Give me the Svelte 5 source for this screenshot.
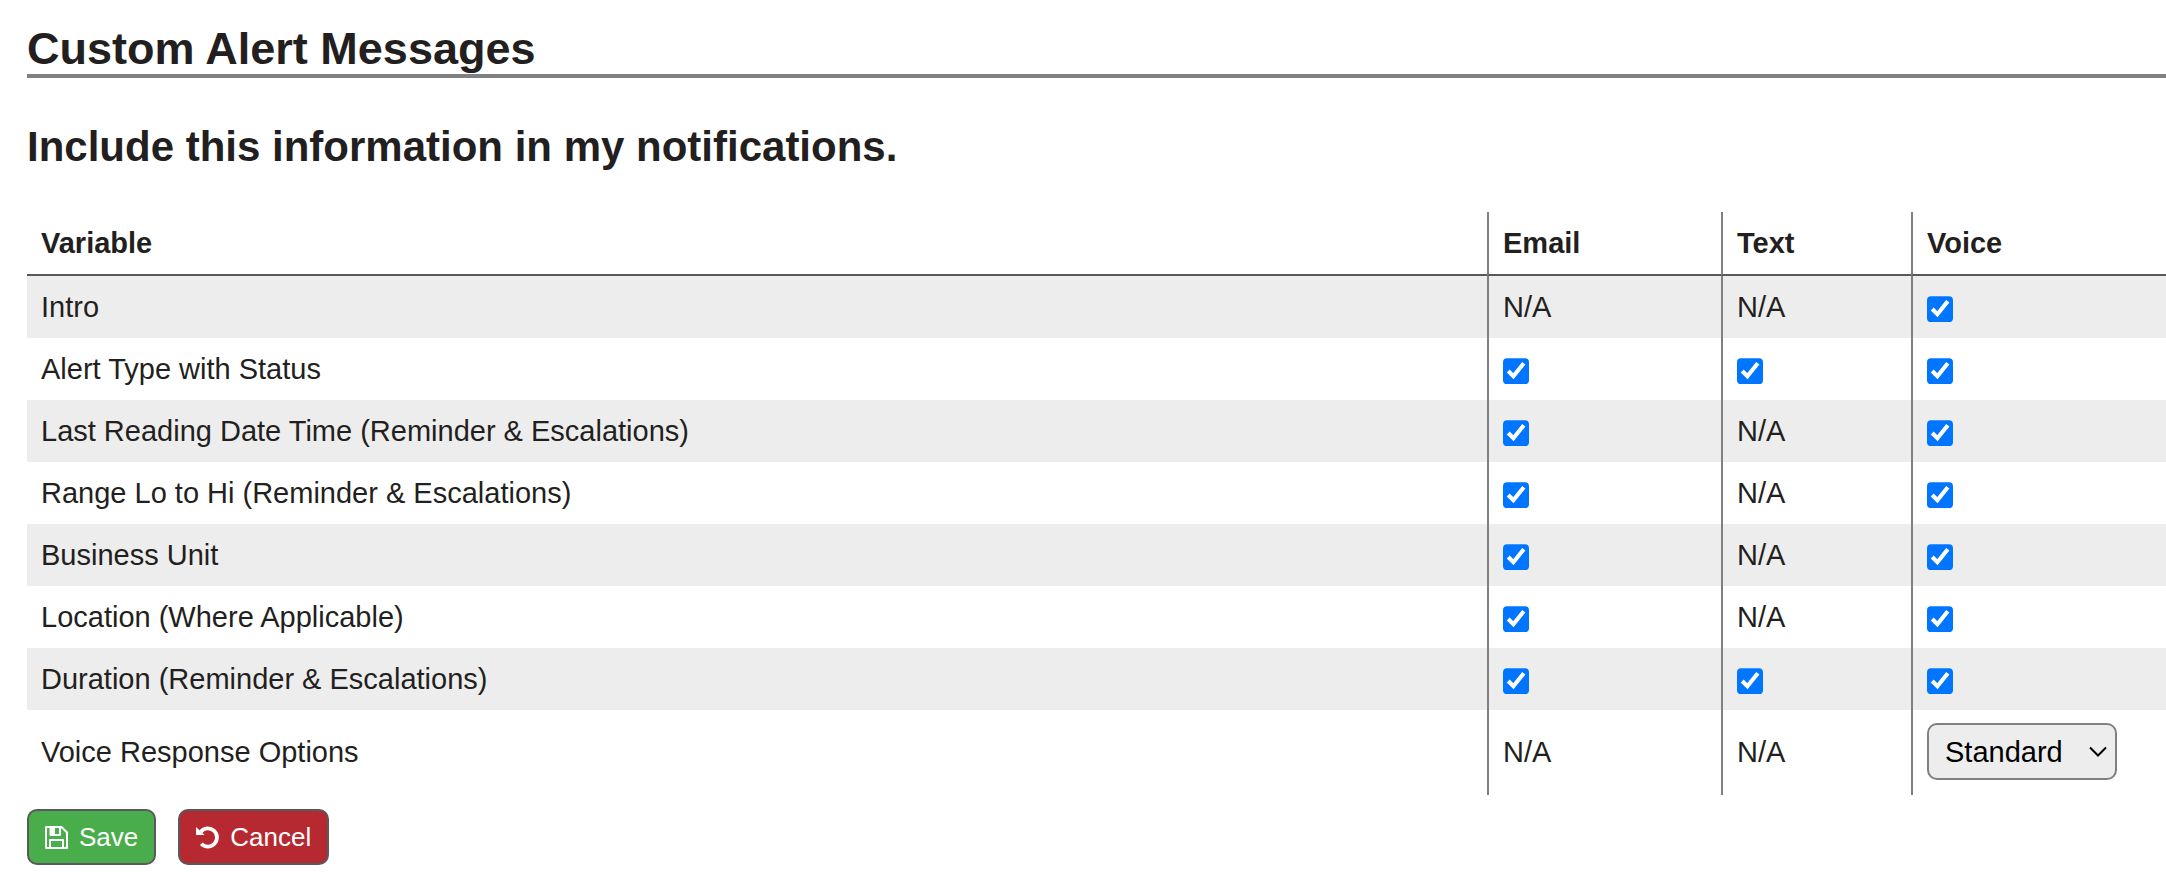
<script>
  const standardOptions = ['Standard', 'Short', 'None'];

  let voiceResponse = $state('Standard');

  // null means the variable is not available on that channel
  let rows = $state([
    { name: 'Intro', email: null, text: null, voice: true },
    { name: 'Alert Type with Status', email: true, text: true, voice: true },
    { name: 'Last Reading Date Time (Reminder & Escalations)', email: true, text: null, voice: true },
    { name: 'Range Lo to Hi (Reminder & Escalations)', email: true, text: null, voice: true },
    { name: 'Business Unit', email: true, text: null, voice: true },
    { name: 'Location (Where Applicable)', email: true, text: null, voice: true },
    { name: 'Duration (Reminder & Escalations)', email: true, text: true, voice: true }
  ]);

  const channels = ['email', 'text', 'voice'];
</script>

<form class="alert-messages" onsubmit={(event) => event.preventDefault()}>
  <h1>Custom Alert Messages</h1>
  <h2>Include this information in my notifications.</h2>

  <table>
    <colgroup>
      <col />
      <col class="col-email" />
      <col class="col-text" />
      <col class="col-voice" />
    </colgroup>
    <thead>
      <tr>
        <th scope="col">Variable</th>
        <th scope="col">Email</th>
        <th scope="col">Text</th>
        <th scope="col">Voice</th>
      </tr>
    </thead>
    <tbody>
      {#each rows as row}
        <tr>
          <td>{row.name}</td>
          {#each channels as channel}
            <td>
              {#if row[channel] === null}
                N/A
              {:else}
                <input type="checkbox" bind:checked={row[channel]} aria-label={`${row.name} ${channel}`} />
              {/if}
            </td>
          {/each}
        </tr>
      {/each}
      <tr class="options-row">
        <td><label for="voice-response">Voice Response Options</label></td>
        <td>N/A</td>
        <td>N/A</td>
        <td>
          <div class="select-wrap">
            <select id="voice-response" bind:value={voiceResponse}>
              {#each standardOptions as option}
                <option>{option}</option>
              {/each}
            </select>
            <svg width="18" height="12" viewBox="0 0 18 12" fill="none" stroke="#000" stroke-width="2" aria-hidden="true">
              <path d="M1 1.5 9 9.5 17 1.5" />
            </svg>
          </div>
        </td>
      </tr>
    </tbody>
  </table>

  <div class="actions">
    <button type="submit" class="save">
      <svg width="23" height="23" viewBox="0 0 23 23" fill="none" stroke="currentColor" stroke-width="2" stroke-linejoin="round" aria-hidden="true">
        <path d="M1 1H16.5L22 6.5V22H1Z" />
        <path d="M5 22V14H18V22" />
        <path d="M5.500 1V9H15V1" />
        <path d="M8 1V8" stroke-width="4" />
      </svg>
      Save
    </button>
    <button type="button" class="cancel">
      <svg width="23" height="23" viewBox="0 0 24 24" fill="none" stroke="currentColor" stroke-width="4" aria-hidden="true">
        <path d="M5 6A9.500 9.500 0 1 1 5.500 18.500" />
        <path d="M0 1V9.500H9Z" fill="currentColor" stroke="none" />
      </svg>
      Cancel
    </button>
  </div>
</form>

<style>
  :global(body) {
    margin: 0;
    background: #fff;
  }

  .alert-messages {
    padding: 24px 0 16px 27px;
    font-family: Arial, "Liberation Sans", sans-serif;
    font-size: 29px;
    color: #231f20;
  }

  h1 {
    margin: 0;
    border-bottom: 4px solid #808080;
    font-size: 45px;
    line-height: 50px;
  }

  h2 {
    margin: 45px 0 41px;
    font-size: 42px;
    line-height: 48px;
  }

  table {
    width: 100%;
    table-layout: fixed;
    border-collapse: separate;
    border-spacing: 0;
  }

  .col-email {
    width: 234px;
  }

  .col-text {
    width: 190px;
  }

  .col-voice {
    width: 255px;
  }

  th,
  td {
    box-sizing: border-box;
    height: 62px;
    padding: 0 14px;
    text-align: left;
    line-height: 34px;
  }

  th {
    height: 64px;
    border-bottom: 2px solid #58595b;
  }

  th + th,
  td + td {
    border-left: 2px solid #808080;
  }

  tbody tr:nth-child(odd) {
    background: #ededed;
  }

  .options-row td {
    height: 85px;
    padding-bottom: 2px;
  }

  input[type='checkbox'] {
    width: 26px;
    height: 26px;
    margin: 0;
    vertical-align: middle;
    clip-path: inset(0 round 4px);
  }

  .select-wrap {
    display: inline-grid;
    align-items: center;
    vertical-align: middle;
  }

  .select-wrap select,
  .select-wrap svg {
    grid-area: 1 / 1;
  }

  .select-wrap svg {
    justify-self: end;
    margin-right: 10px;
    pointer-events: none;
  }

  select {
    appearance: none;
    width: 190px;
    height: 57px;
    padding: 0 32px 0 16px;
    border: 2px solid #808080;
    border-radius: 10px;
    background: #ededed;
    color: #000;
    font: inherit;
  }

  .actions {
    display: flex;
    gap: 22px;
    margin-top: 14px;
  }

  button {
    display: flex;
    align-items: center;
    gap: 11px;
    height: 56px;
    padding: 0 16px;
    border: 2px solid #58595b;
    border-radius: 10px;
    color: #fff;
    font-family: inherit;
    font-size: 26px;
    cursor: pointer;
  }

  .save {
    background: #4aad4c;
  }

  .cancel {
    background: #b72931;
  }
</style>
